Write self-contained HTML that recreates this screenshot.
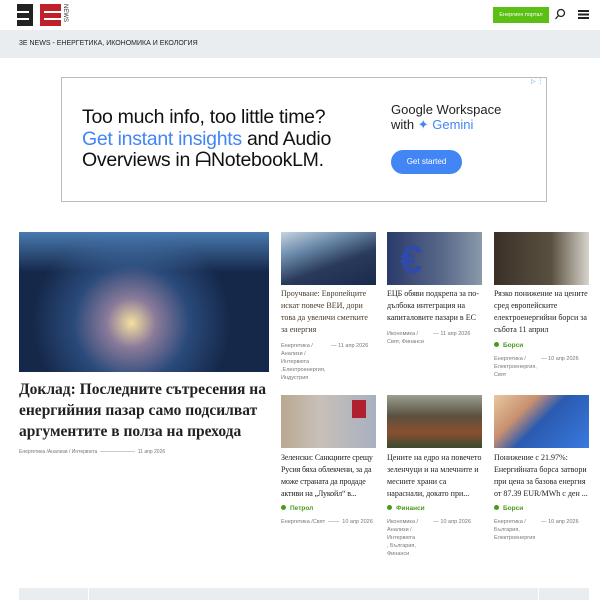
<!DOCTYPE html>
<html><head><meta charset="utf-8"><style>
*{margin:0;padding:0;box-sizing:border-box}
body{width:600px;height:600px;overflow:hidden;background:#fff;font-family:"Liberation Sans",sans-serif;position:relative}
.abs{position:absolute}
.t{font-family:"Liberation Serif",serif;color:#222;font-size:9px;line-height:17px}
.m{font-size:5.5px;color:#777;line-height:8px}
.tag{font-size:6.5px;color:#4a9a1c;font-weight:bold}
.tag:before{content:"";display:inline-block;width:5px;height:5px;border-radius:50%;background:#4a9a1c;margin-right:4px}
</style></head><body>
<div class="abs" style="left:17px;top:4px;width:16px;height:22px;background:#222"></div>
<div class="abs" style="left:17px;top:11px;width:12px;height:2px;background:#fff"></div>
<div class="abs" style="left:17px;top:18px;width:12px;height:2px;background:#fff"></div>
<div class="abs" style="left:40px;top:4px;width:21px;height:22px;background:#c0202a"></div>
<div class="abs" style="left:44px;top:11px;width:17px;height:2px;background:#fff"></div>
<div class="abs" style="left:44px;top:18px;width:17px;height:2px;background:#fff"></div>
<div class="abs" style="left:62px;top:4px;font-size:6px;color:#333;writing-mode:vertical-rl;letter-spacing:0">NEWS</div>
<div class="abs" style="left:493px;top:7px;width:56px;height:16px;background:#5cbf14;color:#fff;font-size:5.5px;text-align:center;line-height:16px">Енергиен портал</div>
<svg class="abs" style="left:554px;top:8px" width="12" height="12"><circle cx="7" cy="5" r="3.5" fill="none" stroke="#222" stroke-width="1.3"/><path d="M4.5 7.5L1.5 11" stroke="#222" stroke-width="1.3"/></svg>
<div class="abs" style="left:578px;top:10px;width:11px;height:1.5px;background:#222;box-shadow:0 3.5px #222,0 7px #222"></div>
<div class="abs" style="left:0;top:30px;width:600px;height:28px;background:#e9edf0"></div>
<div class="abs" style="left:19px;top:40px;font-size:7px;color:#222">3E NEWS - ЕНЕРГЕТИКА, ИКОНОМИКА И ЕКОЛОГИЯ</div>
<div class="abs" style="left:61px;top:77px;width:486px;height:125px;border:1px solid #bbb"></div>
<div class="abs" style="left:82px;top:107px;font-size:19.5px;line-height:21.5px;color:#111;letter-spacing:-0.3px">Too much info, too little time?<br><span style="color:#4285f4">Get instant insights</span> and Audio<br>Overviews in ᗩNotebookLM.</div>
<div class="abs" style="left:391px;top:102px;font-size:13px;line-height:15px;color:#222">Google Workspace<br>with <span style="color:#4285f4">✦ Gemini</span></div>
<div class="abs" style="left:391px;top:150px;width:71px;height:24px;border-radius:12px;background:#4285f4;color:#fff;font-size:8px;text-align:center;line-height:24px">Get started</div>
<div class="abs" style="left:531px;top:78px;font-size:6px;color:#4aa3df">▷ ⋮</div>
<div class="abs" style="left:19px;top:232px;width:250px;height:140px;background:radial-gradient(circle at 45% 65%,#f4e0a0 0,#8a7a9a 15%,#2a4a7a 35%,#15284a 60%),linear-gradient(#3a6aa0,#0f2040);"></div>
<div class="abs" style="left:19px;top:232px;width:250px;height:40px;background:linear-gradient(#4a7ab0,rgba(30,60,100,0))"></div>
<div class="abs t" style="left:19px;top:379px;width:255px;font-size:15.5px;line-height:21px;font-weight:bold">Доклад: Последните сътресения на енергийния пазар само подсилват аргументите в полза на прехода</div>
<div class="abs m" style="left:19px;top:448px;font-size:5px">Енергетика /Анализи / Интервюта &nbsp;———————&nbsp; 11 апр 2026</div>
<div class="abs" style="left:281px;top:232px;width:95px;height:53px;background:linear-gradient(160deg,#c8d4e0 0,#6a8aaa 30%,#2a3a5a 60%,#1a2a4a)"></div>
<div class="abs" style="left:387px;top:232px;width:95px;height:53px;background:linear-gradient(90deg,#2a3a6a,#5a6a8a 60%,#8a9aaa)"></div>
<div class="abs" style="left:400px;top:238px;font-size:40px;line-height:44px;color:#2f4aa8;font-weight:bold">€</div>
<div class="abs" style="left:494px;top:232px;width:95px;height:53px;background:linear-gradient(90deg,#3a3028,#5a5040 60%,#d8d4cc)"></div>
<div class="abs t" style="left:281px;top:288px;width:95px;font-size:8px;line-height:12px;color:#4a3a2a">Проучване: Европейците искат повече ВЕИ, дори това да увеличи сметките за енергия</div>
<div class="abs m" style="left:281px;top:342px;width:95px">Енергетика / &nbsp; &nbsp; &nbsp; &nbsp; &nbsp; &nbsp;— 11 апр 2026<br>Анализи /<br>Интервюта<br>,Електроенергия,<br>Индустрия</div>
<div class="abs t" style="left:387px;top:288px;width:95px;font-size:8px;line-height:12px">ЕЦБ обяви подкрепа за по-дълбока интеграция на капиталовите пазари в ЕС</div>
<div class="abs m" style="left:387px;top:330px;width:95px">Икономика / &nbsp; &nbsp; &nbsp; &nbsp; &nbsp;— 11 апр 2026<br>Свят, Финанси</div>
<div class="abs t" style="left:494px;top:288px;width:95px;font-size:8px;line-height:12px">Рязко понижение на цените сред европейските електроенергийни борси за събота 11 април</div>
<div class="abs tag" style="left:494px;top:342px">Борси</div>
<div class="abs m" style="left:494px;top:355px;width:95px">Енергетика / &nbsp; &nbsp; &nbsp; &nbsp; &nbsp;— 10 апр 2026<br>Електроенергия,<br>Свят</div>
<div class="abs" style="left:281px;top:395px;width:95px;height:53px;background:linear-gradient(90deg,#b8a890,#c8c0b8 40%,#a8b0c0)"></div>
<div class="abs" style="left:352px;top:400px;width:14px;height:18px;background:#b02030"></div>
<div class="abs" style="left:387px;top:395px;width:95px;height:53px;background:linear-gradient(#9aa090,#5a5040 40%,#8a5030 70%,#3a4a30)"></div>
<div class="abs" style="left:494px;top:395px;width:95px;height:53px;background:linear-gradient(135deg,#e8c8a0 0,#c89070 30%,#2a5ab0 50%,#3a7ae0)"></div>
<div class="abs t" style="left:281px;top:452px;width:102px;font-size:8px;line-height:12px;letter-spacing:-0.15px">Зеленски: Санкциите срещу Русия бяха облекчени, за да може страната да продаде активи на „Лукойл“ в...</div>
<div class="abs tag" style="left:281px;top:505px">Петрол</div>
<div class="abs m" style="left:281px;top:518px;width:95px">Енергетика /Свят &nbsp;——&nbsp; 10 апр 2026</div>
<div class="abs t" style="left:387px;top:452px;width:95px;font-size:8px;line-height:12px">Цените на едро на повечето зеленчуци и на млечните и месните храни са нараснали, докато при...</div>
<div class="abs tag" style="left:387px;top:505px">Финанси</div>
<div class="abs m" style="left:387px;top:518px;width:95px">Икономика / &nbsp; &nbsp; &nbsp; &nbsp; &nbsp;— 10 апр 2026<br>Анализи /<br>Интервюта<br>, България,<br>Финанси</div>
<div class="abs t" style="left:494px;top:452px;width:95px;font-size:8px;line-height:12px">Понижение с 21.97%: Енергийната борса затвори при цена за базова енергия от 87.39 EUR/MWh с ден ...</div>
<div class="abs tag" style="left:494px;top:505px">Борси</div>
<div class="abs m" style="left:494px;top:518px;width:95px">Енергетика / &nbsp; &nbsp; &nbsp; &nbsp; &nbsp;— 10 апр 2026<br>България,<br>Електроенергия</div>
<div class="abs" style="left:19px;top:588px;width:570px;height:12px;background:#e9edf0"></div>
<div class="abs" style="left:88px;top:588px;width:1px;height:12px;background:#fff"></div>
<div class="abs" style="left:538px;top:588px;width:1px;height:12px;background:#fff"></div>
</body></html>
